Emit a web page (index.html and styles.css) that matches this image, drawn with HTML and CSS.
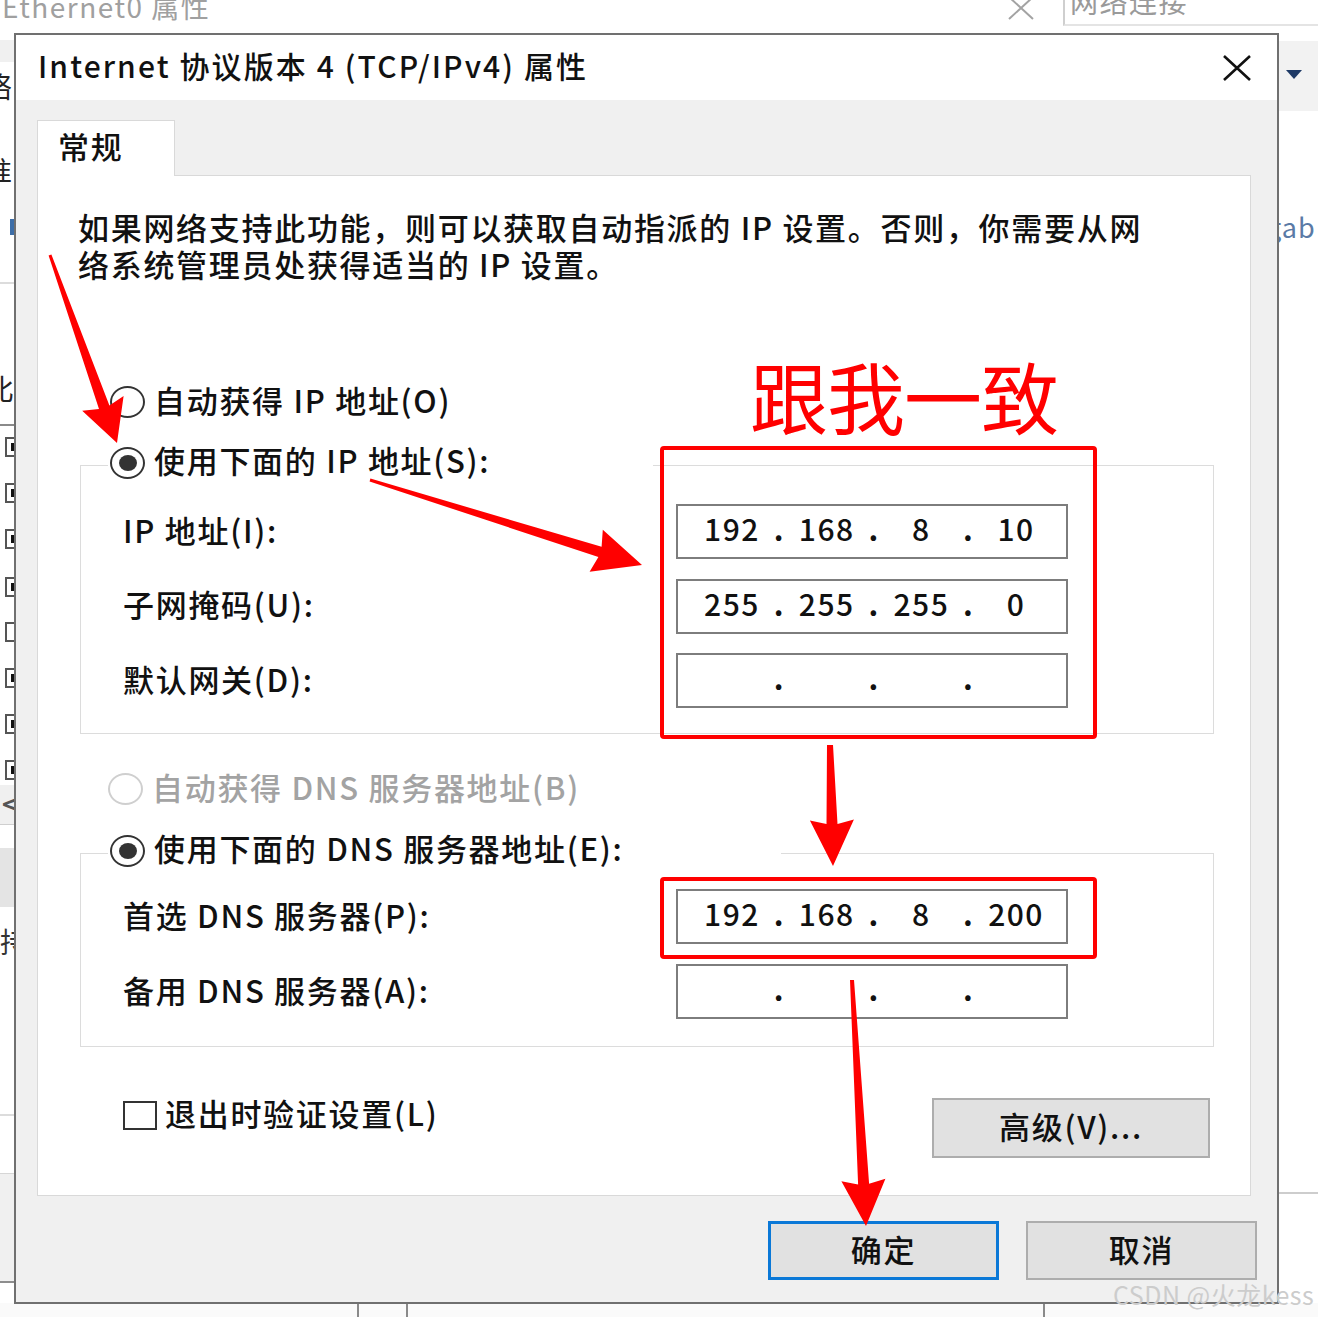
FILE: index.html
```html
<!DOCTYPE html>
<html lang="zh-CN">
<head>
<meta charset="utf-8">
<title>Internet 协议版本 4 (TCP/IPv4) 属性</title>
<link rel="stylesheet" href="styles.css">
</head>
<body>
<div class="desk">
  <!-- background windows -->
  <div class="eth-title">Ethernet0 属性</div>
  <svg class="eth-close" width="30" height="26" viewBox="0 0 30 26"><path d="M3 0 L27 22 M27 0 L3 22" stroke="#a3a3a3" stroke-width="2" fill="none"/></svg>
  <div class="net-win">
    <div class="net-title">网络连接</div>
  </div>
  <div class="net-bar"><span class="tri"></span></div>
  <div class="gab">gab</div>
  <div class="right-line"></div>
  <div class="bottom-strip">
    <span class="vline v1"></span><span class="vline v2"></span><span class="vline v3"></span>
  </div>
  <div class="left-strip">
    <div class="ls-band b1"></div>
    <div class="ls-char c1">络</div>
    <div class="ls-char c2">准</div>
    <div class="ls-blue"></div>
    <div class="ls-line l1"></div>
    <div class="ls-char c3">比</div>
    <div class="ls-line l2"></div>
    <div class="ls-cb k1"></div><div class="ls-cb k2"></div><div class="ls-cb k3"></div><div class="ls-cb k4"></div>
    <div class="ls-cb k5 empty"></div><div class="ls-cb k6"></div><div class="ls-cb k7"></div><div class="ls-cb k8"></div>
    <div class="ls-band b2"><span class="lt">&lt;</span></div>
    <div class="ls-band b3"></div>
    <div class="ls-char c4">持</div>
    <div class="ls-line l3"></div>
    <div class="ls-band b4"></div>
  </div>

  <!-- dialog -->
  <div class="dialog">
    <div class="titlebar">
      <span class="title">Internet 协议版本 4 (TCP/IPv4) 属性</span>
      <svg class="close" width="30" height="28" viewBox="0 0 30 28"><path d="M2 2 L28 26 M28 2 L2 26" stroke="#111" stroke-width="2.6" fill="none"/></svg>
    </div>
    <div class="client">
      <div class="tab">常规</div>
      <div class="panel">
        <p class="intro">如果网络支持此功能，则可以获取自动指派的 IP 设置。否则，你需要从网<br>络系统管理员处获得适当的 IP 设置。</p>

        <div class="opt opt-auto-ip"><span class="radio"></span>自动获得 IP 地址(O)</div>

        <div class="group g-ip">
          <div class="legend lg-ip"><span class="radio on"></span>使用下面的 IP 地址(S):</div>
          <div class="fields">
            <div class="lbl">IP 地址(I):</div>
            <div class="ipbox"><span>192</span><i>.</i><span>168</span><i>.</i><span>8</span><i>.</i><span>10</span></div>
            <div class="lbl">子网掩码(U):</div>
            <div class="ipbox"><span>255</span><i>.</i><span>255</span><i>.</i><span>255</span><i>.</i><span>0</span></div>
            <div class="lbl">默认网关(D):</div>
            <div class="ipbox"><span></span><i>.</i><span></span><i>.</i><span></span><i>.</i><span></span></div>
          </div>
        </div>

        <div class="opt opt-auto-dns disabled"><span class="radio off"></span>自动获得 DNS 服务器地址(B)</div>

        <div class="group g-dns">
          <div class="legend lg-dns"><span class="radio on"></span>使用下面的 DNS 服务器地址(E):</div>
          <div class="fields">
            <div class="lbl">首选 DNS 服务器(P):</div>
            <div class="ipbox"><span>192</span><i>.</i><span>168</span><i>.</i><span>8</span><i>.</i><span>200</span></div>
            <div class="lbl">备用 DNS 服务器(A):</div>
            <div class="ipbox"><span></span><i>.</i><span></span><i>.</i><span></span><i>.</i><span></span></div>
          </div>
        </div>

        <div class="bottom-row">
          <label class="check"><span class="cbox"></span>退出时验证设置(L)</label>
          <button class="btn adv">高级(V)...</button>
        </div>
      </div>
      <div class="footer">
        <button class="btn ok">确定</button>
        <button class="btn">取消</button>
      </div>
    </div>
  </div>

  <!-- annotations -->
  <svg class="marks" width="1318" height="1317" viewBox="0 0 1318 1317">
    <rect x="662" y="448" width="433" height="289" fill="none" stroke="#ff0000" stroke-width="4" rx="2"/>
    <rect x="662" y="879" width="433" height="78" fill="none" stroke="#ff0000" stroke-width="4" rx="2"/>
    <polygon fill="#ff0000" points="48.6,255.5 99,409.1 82.2,410.8 117,443 123.6,396 109.4,405.4 51.4,254.5"/>
    <polygon fill="#ff0000" points="369.6,481.4 598.4,557.1 589.6,571.7 642,565 602.8,529.7 601.6,546.7 370.4,478.6"/>
    <polygon fill="#ff0000" points="827,745 826.5,824 809.9,820.5 833,866 853.9,819.5 837.5,824 833,745"/>
    <polygon fill="#ff0000" points="850,980.1 858.1,1184.4 841.4,1181.3 866,1226 885.4,1178.8 869.1,1183.8 854,979.9"/>
  </svg>
  <div class="note">跟我一致</div>
  <div class="watermark">CSDN @火龙kess</div>
</div>
</body>
</html>
```
FILE: styles.css
```css
* { box-sizing: border-box; }
html, body { margin: 0; padding: 0; }
body {
  width: 1318px;
  height: 1317px;
  overflow: hidden;
  background: #ffffff;
  font-family: "Noto Sans CJK SC", "Noto Sans", sans-serif;
  color: #111;
}
.desk { position: relative; width: 1318px; height: 1317px; overflow: hidden; background: #fff; }

/* ---------- background windows ---------- */
.eth-title {
  position: absolute; left: 2px; top: -11px;
  font-size: 28px; line-height: 34px; color: #a0a0a0; letter-spacing: 1.5px;
}
.eth-close { position: absolute; left: 1006px; top: -3px; }
.net-win {
  position: absolute; left: 1063px; top: 0; width: 260px; height: 26px;
  border-left: 2px solid #cfcfcf; border-bottom: 2px solid #e4e4e4;
}
.net-title {
  position: absolute; left: 5px; top: -16px;
  font-size: 28px; line-height: 34px; color: #9a9a9a; letter-spacing: 1.5px;
}
.net-bar {
  position: absolute; left: 1270px; top: 41px; width: 60px; height: 70px;
  background: #f2f2f2;
}
.net-bar .tri {
  position: absolute; left: 16px; top: 29px;
  width: 0; height: 0;
  border-left: 8px solid transparent; border-right: 8px solid transparent;
  border-top: 9px solid #1e3a66;
}
.gab {
  position: absolute; left: 1266px; top: 210px;
  font-size: 27px; line-height: 34px; color: #5a7aa6; letter-spacing: 1px;
}
.right-line { position: absolute; left: 1278px; top: 1192px; width: 40px; height: 2px; background: #cdcdcd; }
.bottom-strip { position: absolute; left: 0; top: 1303px; width: 1318px; height: 14px; background: #fafafa; }
.vline { position: absolute; top: 0; width: 2px; height: 14px; background: #8a8a8a; }
.v1 { left: 357px; }
.v2 { left: 406px; }
.v3 { left: 1043px; }

.left-strip { position: absolute; left: 0; top: 33px; width: 16px; height: 1270px; overflow: hidden; background: #fff; }
.ls-band { position: absolute; left: 0; width: 16px; background: #f0f0f0; }
.b1 { top: 7px; height: 22px; }
.b2 { top: 752px; height: 40px; border-bottom: 1px solid #cfcfcf; }
.b3 { top: 815px; height: 59px; background: #e4e4e4; }
.b4 { top: 1140px; height: 110px; border-top: 1px solid #d6d6d6; border-bottom: 2px solid #8d8d8d; }
.lt { position: absolute; left: 2px; top: 4px; font-size: 26px; line-height: 28px; color: #555; font-weight: bold; }
.ls-char { position: absolute; font-size: 28px; line-height: 30px; color: #222; }
.c1 { left: -16px; top: 38px; }
.c2 { left: -16px; top: 122px; }
.c3 { left: -14px; top: 340px; }
.c4 { left: 0px; top: 893px; color: #333; }
.ls-blue { position: absolute; left: 10px; top: 186px; width: 4px; height: 16px; background: #3d6ea8; }
.ls-line { position: absolute; left: 0; width: 16px; height: 2px; }
.l1 { top: 249px; background: #dcdcdc; }
.l2 { top: 391px; background: #8a8a8a; }
.l3 { top: 1081px; background: #dcdcdc; }
.ls-cb { position: absolute; left: 5px; width: 14px; height: 20px; border: 2px solid #555; background: #fff; }
.ls-cb::after { content: ""; position: absolute; left: 4px; top: 4px; width: 5px; height: 8px; background: #111; }
.ls-cb.empty::after { display: none; }
.k1 { top: 404px; } .k2 { top: 450px; } .k3 { top: 496px; } .k4 { top: 544px; }
.k5 { top: 589px; } .k6 { top: 635px; } .k7 { top: 681px; } .k8 { top: 727px; }

/* ---------- dialog ---------- */
.dialog {
  position: absolute; left: 14px; top: 33px; width: 1265px; height: 1271px;
  border: 2px solid #707070;
  background: #f0f0f0;
  display: flex; flex-direction: column;
  z-index: 2;
  font-weight: 500;
}
.titlebar {
  height: 65px; flex: none; background: #fff;
  display: flex; align-items: center; justify-content: space-between;
  padding: 0 25px 5px 22px;
}
.title { font-size: 30px; letter-spacing: 2.1px; color: #111; }
.close { display: block; margin-top: 5px; }

.client { flex: 1; display: flex; flex-direction: column; padding: 20px 26px 0 21px; }
.tab {
  width: 138px; height: 56px; margin-bottom: -1px;
  background: #fff; border: 1px solid #d9d9d9; border-bottom: none;
  position: relative; z-index: 1;
  font-size: 31px; letter-spacing: 1.7px; line-height: 50px; padding-left: 20px;
}
.panel {
  height: 1021px; background: #fff; border: 1px solid #d9d9d9;
  padding: 32px 0 0 40px;
  font-size: 31px; letter-spacing: 1.7px;
}
.intro { margin: 0; line-height: 37px; white-space: nowrap; }

.opt { display: flex; align-items: center; height: 40px; white-space: nowrap; padding-bottom: 6px; }
.opt-auto-ip { margin: 100px 0 0 32px; }
.opt-auto-dns { margin: 35px 0 0 30px; }
.disabled { color: #a3a3a3; }

.radio {
  width: 35px; height: 32px; border-radius: 50%;
  border: 2.5px solid #333; background: #fff;
  margin-right: 9px; margin-top: 6px; flex: none;
  display: flex; align-items: center; justify-content: center;
}
.radio.on::after { content: ""; width: 18px; height: 16px; border-radius: 50%; background: #333; }
.radio.off { border: 2px solid #cfcfcf; }

.group { width: 1134px; margin-left: 2px; border: 1px solid #dcdcdc; }
.g-ip { margin-top: 43px; padding-bottom: 25px; }
.g-dns { margin-top: 44px; padding-bottom: 27px; }
.legend {
  display: flex; align-items: center; height: 40px; margin: -23px 0 0 27px;
  padding: 0 0 7px 2px; background: #fff; white-space: nowrap;
}
.legend .radio { margin-top: 7px; }
.lg-ip { width: 545px; }
.lg-dns { width: 673px; }

.fields {
  display: grid; grid-template-columns: 553px 392px; grid-auto-rows: 55px;
  row-gap: 19.5px; padding-left: 42px; align-items: center;
}
.g-ip .fields { margin-top: 21px; }
.g-dns .fields { margin-top: 18px; row-gap: 20px; }
.lbl { white-space: nowrap; padding-bottom: 5px; }
.ipbox {
  height: 55px; border: 2px solid #7d7d7d; background: #fff;
  display: flex; align-items: center; padding: 0 0 7px 14px;
  font-size: 30px; letter-spacing: 1.5px;
}
.ipbox span { width: 80px; text-align: center; }
.ipbox i { width: 14.7px; text-align: center; font-style: normal; font-weight: bold; }

.bottom-row {
  display: flex; justify-content: space-between; align-items: flex-start;
  width: 1132px; margin-top: 51px; padding-left: 45px;
}
.check { display: flex; align-items: center; height: 34px; white-space: nowrap; padding-bottom: 5px; }
.cbox { width: 34px; height: 29px; border: 2.5px solid #333; background: #fff; margin-right: 8px; margin-top: 5px; }

.btn {
  font-family: "Noto Sans CJK SC", "Noto Sans", sans-serif;
  font-size: 31px; letter-spacing: 1.7px; color: #111; font-weight: 500;
  background: #e1e1e1; border: 2px solid #adadad;
  width: 231px; height: 59px; padding: 0 0 5px;
}
.adv { width: 278px; height: 60px; }
.footer { display: flex; justify-content: flex-end; gap: 27px; margin: 25px -6px 0 0; }
.ok { border: 3px solid #0a78d7; }

/* ---------- annotations ---------- */
.marks { position: absolute; left: 0; top: 0; z-index: 5; }
.note {
  position: absolute; left: 750px; top: 356px; z-index: 6;
  font-size: 78px; line-height: 78px; color: #ff0000; letter-spacing: -1px;
}
.watermark {
  position: absolute; left: 1113px; top: 1279px; z-index: 6;
  font-size: 25px; line-height: 30px; color: #cccccc; letter-spacing: 0.5px;
}
```
